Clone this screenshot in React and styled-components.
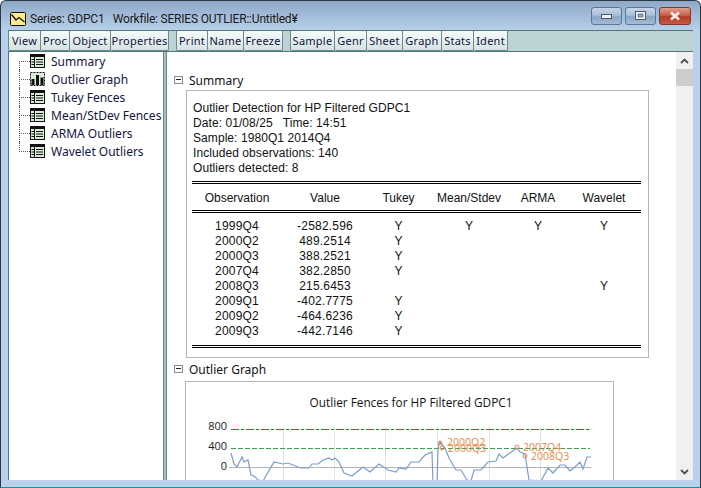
import React from 'react'
import styled, { createGlobalStyle } from 'styled-components'

const Global = createGlobalStyle`
  html, body { margin: 0; padding: 0; background: #fff; overflow: hidden; }
  * { box-sizing: border-box; }
`

const Frame = styled.div`
  width: 701px;
  height: 488px;
  display: flex;
  flex-direction: column;
  padding: 0 7px 7px 7px;
  border: 1px solid #2c3a44;
  border-bottom-color: #1f8fa0;
  border-radius: 6px 6px 0 0;
  background: linear-gradient(#8ea8c8 0, #b9d1ea 30px);
  font-family: "Noto Sans", sans-serif;
  overflow: hidden;
`

const TitleBar = styled.div`
  height: 29px;
  flex: none;
  display: flex;
  align-items: center;
  gap: 4px;
  padding: 7px 2px 0 2px;
  font-family: Roboto, sans-serif;
  font-size: 12px;
  letter-spacing: -0.2px;
  color: #1a1a1a;
`

const TitleText = styled.span`
  white-space: pre;
  flex: 1;
`

const WinButtons = styled.div`
  display: flex;
  gap: 3px;
  margin-top: -7px;
`

const WinButton = styled.div`
  width: ${p => p.$close ? 32 : 31}px;
  height: 18px;
  border: 1px solid ${p => p.$close ? '#7a3a30' : '#5f7690'};
  border-radius: 3px;
  display: flex;
  align-items: center;
  justify-content: center;
  background: ${p => p.$close
    ? 'linear-gradient(#e0a090 0, #c9604c 45%, #b23a26 55%, #c95a44 100%)'
    : 'linear-gradient(#c5d5e8 0, #a9bfd8 45%, #8aa5c5 55%, #a3bcd8 100%)'};
`

const Toolbar = styled.div`
  height: 22px;
  flex: none;
  display: flex;
  background: #bcd3d3;
  border-top: 1px solid #54757a;
  border-bottom: 1px solid #54757a;
`

const ToolGroup = styled.div`
  display: flex;
  margin-right: ${p => p.$gap || 0}px;
`

const ToolButton = styled.div`
  width: ${p => p.$w}px;
  height: 20px;
  display: flex;
  align-items: center;
  justify-content: center;
  font-size: 11px;
  color: #14143c;
  letter-spacing: 0.25px;
  border: 1px solid #6d8a8a;
  border-top: none;
  border-left: none;
  border-radius: 0 0 2px 2px;
  background: linear-gradient(#f6fbfb, #d5e3e3);
  &:first-child {
    border-left: 1px solid #6d8a8a;
  }
`

const Body = styled.div`
  flex: 1;
  min-height: 0;
  display: flex;
  background: #fff;
  border-left: 1px solid #54757a;
`

const Tree = styled.div`
  width: 154px;
  flex: none;
  display: flex;
  flex-direction: column;
`

const TreeRow = styled.div`
  position: relative;
  height: 18px;
  display: flex;
  align-items: center;
  gap: 6px;
  padding-left: 21px;
  font-size: 12px;
  white-space: nowrap;
  color: #14143c;
  &::before {
    content: "";
    position: absolute;
    left: 10px;
    top: ${p => p.$first ? '9px' : '0'};
    height: ${p => p.$first ? '9px' : p.$last ? '10px' : '18px'};
    border-left: 1px dotted #555;
  }
  &::after {
    content: "";
    position: absolute;
    left: 10px;
    top: 9px;
    width: 11px;
    border-top: 1px dotted #555;
  }
`

const Splitter = styled.div`
  width: 4px;
  flex: none;
  background: #a9c0c0;
  border-left: 1px solid #6d8a8a;
  border-right: 1px solid #6d8a8a;
`

const Main = styled.div`
  flex: 1;
  min-width: 0;
  overflow: hidden;
  padding: 19px 0 0 7px;
`

const SectionHead = styled.div`
  height: 18px;
  display: flex;
  align-items: center;
  gap: 6px;
  font-size: 12px;
  color: #111;
`

const Collapse = styled.div`
  width: 9px;
  height: 8px;
  flex: none;
  margin-top: -1px;
  border: 1px solid #8a8a8a;
  display: flex;
  align-items: center;
  justify-content: center;
  &::before {
    content: "";
    width: 5px;
    border-top: 1px solid #222;
  }
`

const ReportBox = styled.div`
  width: 463px;
  margin: 1px 0 2px 12px;
  padding: 10px 5px 0 5px;
  height: 268px;
  border: 1px solid #b4b4b4;
  font-family: "Liberation Sans", Arial, sans-serif;
  font-size: 12px;
  color: #111;
`

const InfoLine = styled.div`
  height: 15px;
  line-height: 15px;
  padding-left: 1px;
  white-space: pre;
  letter-spacing: 0.07px;
`

const Table = styled.div`
  width: 449px;
  margin-top: 5px;
  border-top: 3px double #000;
  border-bottom: 3px double #000;
  height: 167px;
`

const columns = '90px 86px 61px 80px 58px 74px'

const HeadRow = styled.div`
  display: grid;
  grid-template-columns: ${columns};
  height: 29px;
  align-items: center;
  padding-top: 1px;
  border-bottom: 3px double #000;
`

const DataRow = styled.div`
  display: grid;
  grid-template-columns: ${columns};
  height: 15px;
  line-height: 15px;
  letter-spacing: 0.2px;
`

const Rows = styled.div`
  padding-top: 6px;
`

const Cell = styled.div`
  text-align: center;
  white-space: nowrap;
`

const ChartCard = styled.div`
  width: 429px;
  height: 300px;
  margin: 3px 0 0 11px;
  border: 1px solid #b4b4b4;
  background: #fff;
`

const ChartSvg = styled.svg`
  display: block;
`

const ScrollBar = styled.div`
  width: 17px;
  flex: none;
  display: flex;
  flex-direction: column;
  align-items: center;
  background: #f0f0f0;
`

const ScrollCap = styled.div`
  height: 17px;
  flex: none;
  display: flex;
  align-items: center;
  justify-content: center;
`

const ScrollThumb = styled.div`
  width: 100%;
  height: 17px;
  flex: none;
  background: #cdcdcd;
`

const ScrollRest = styled.div`
  flex: 1;
`

const TableIcon = () => (
  <svg width="15" height="14" viewBox="0 0 15 14">
    <rect x="0.5" y="0.5" width="14" height="13" fill="#d8ecd8" stroke="#111" />
    <rect x="1" y="1" width="13" height="2" fill="#111" />
    <path d="M4.5 1V13" stroke="#111" />
    <path d="M6 5.5H13M6 8H13M6 10.5H13M1.5 5.5H4M1.5 8H4M1.5 10.5H4" stroke="#111" />
  </svg>
)

const GraphIcon = () => (
  <svg width="15" height="14" viewBox="0 0 15 14">
    <rect x="0.5" y="0.5" width="14" height="13" fill="#d8ecd8" stroke="#111" strokeDasharray="2 1" />
    <path d="M3 13V7M7.5 13V3M12 13V5.5" stroke="#111" strokeWidth="3" />
  </svg>
)

const SeriesIcon = () => (
  <svg width="16" height="14" viewBox="0 0 16 14">
    <rect x="0.5" y="0.5" width="15" height="13" rx="1" fill="#ffe98a" stroke="#111" />
    <path d="M1.5 2.5L6 8L9 5.5L14.5 10" fill="none" stroke="#111" strokeWidth="1.3" />
  </svg>
)

const treeItems = [
  ['Summary', TableIcon],
  ['Outlier Graph', GraphIcon],
  ['Tukey Fences', TableIcon],
  ['Mean/StDev Fences', TableIcon],
  ['ARMA Outliers', TableIcon],
  ['Wavelet Outliers', TableIcon],
]

const toolGroups = [
  { gap: 7, items: [['View', 33], ['Proc', 29], ['Object', 41], ['Properties', 58]] },
  { gap: 7, items: [['Print', 32], ['Name', 36], ['Freeze', 39]] },
  { gap: 0, items: [['Sample', 45], ['Genr', 32], ['Sheet', 36], ['Graph', 39], ['Stats', 32], ['Ident', 34]] },
]

const rows = [
  ['1999Q4', '-2582.596', 'Y', 'Y', 'Y', 'Y'],
  ['2000Q2', '489.2514', 'Y', '', '', ''],
  ['2000Q3', '388.2521', 'Y', '', '', ''],
  ['2007Q4', '382.2850', 'Y', '', '', ''],
  ['2008Q3', '215.6453', '', '', '', 'Y'],
  ['2009Q1', '-402.7775', 'Y', '', '', ''],
  ['2009Q2', '-464.6236', 'Y', '', '', ''],
  ['2009Q3', '-442.7146', 'Y', '', '', ''],
]

const heads = ['Observation', 'Value', 'Tukey', 'Mean/Stdev', 'ARMA', 'Wavelet']

// traced from the reference, in screen pixels
const seriesA = [[231,453],[234,464],[237,467],[242,457],[244,462],[248,460],[251,475],[254,476],[258,480],[263,481],[274,462],[283,464],[288,463],[298,467],[301,468],[309,468],[312,464],[318,464],[323,460],[329,458],[332,460],[335,458],[339,462],[344,473],[352,476],[363,467],[370,472],[379,464],[388,470],[396,472],[399,468],[406,469],[411,462],[419,462],[425,455],[432,452],[433,484]]
const seriesB = [[437,484],[438,448],[440,442],[445,448],[449,458],[456,470],[461,470],[467,480],[471,481],[474,470],[481,470],[488,462],[496,461],[499,454],[503,458],[507,455],[517,448],[520,452],[525,454],[529,480],[541,481],[548,468],[553,473],[560,465],[565,465],[570,471],[575,467],[580,462],[583,469],[587,457],[591,457]]
const grid = [283, 334, 385, 437, 489, 540]
const markers = [[440, 443], [442, 448], [517, 447], [525, 456]]
const labels = [['2000Q3', 448, 452], ['2000Q2', 447, 446], ['2007Q4', 523, 451], ['2008Q3', 531, 460]]

const OX = 186
const OY = 382
const toPts = list => list.map(([x, y]) => `${x - OX},${y - OY}`).join(' ')

function Chart() {
  return (
    <ChartSvg width="427" height="298" viewBox="0 0 427 298">
      <text x="225" y="25" textAnchor="middle" fontFamily="Open Sans, sans-serif" fontSize="11.8" fill="#111">
        Outlier Fences for HP Filtered GDPC1
      </text>
      {grid.map(x => (
        <line key={x} x1={x - OX + 0.5} x2={x - OX + 0.5} y1={427 - OY} y2={298} stroke="#e2e2e2" />
      ))}
      <line x1={229 - OX} x2={591 - OX} y1={467.5 - OY} y2={467.5 - OY} stroke="#b4b4b4" />
      {[['800', 430], ['400', 450], ['0', 470]].map(([t, y]) => (
        <text key={t} x={227 - OX} y={y - OY} textAnchor="end" fontFamily="Open Sans, sans-serif" fontSize="11" fill="#222">{t}</text>
      ))}
      <line x1={231 - OX} x2={590 - OX} y1={429.5 - OY} y2={429.5 - OY} stroke="#dd2a26" shapeRendering="crispEdges" strokeDasharray="8 2 3 2" />
      <line x1={231 - OX} x2={590 - OX} y1={448.5 - OY} y2={448.5 - OY} stroke="#3f9a54" shapeRendering="crispEdges" strokeDasharray="5 2" />
      <polyline points={toPts(seriesA)} fill="none" stroke="#7c9ccf" strokeWidth="1.2" />
      <polyline points={toPts(seriesB)} fill="none" stroke="#7c9ccf" strokeWidth="1.2" />
      {markers.map(([x, y]) => (
        <circle key={x + '-' + y} cx={x - OX} cy={y - OY} r="2" fill="none" stroke="#e8894a" />
      ))}
      {labels.map(([t, x, y]) => (
        <text key={t} x={x - OX} y={y - OY} fontFamily="Open Sans, sans-serif" fontSize="10.5" fill="#e8894a">{t}</text>
      ))}
    </ChartSvg>
  )
}

export default function App() {
  return (
    <Frame>
      <Global />
      <TitleBar>
        <SeriesIcon />
        <TitleText>Series: GDPC1   Workfile: SERIES OUTLIER::Untitled¥</TitleText>
        <WinButtons>
          <WinButton>
            <svg width="11" height="6" viewBox="0 0 11 6"><rect x="0.5" y="1.5" width="10" height="4" fill="#eef3f8" stroke="#4a5a6a" /></svg>
          </WinButton>
          <WinButton>
            <svg width="11" height="9" viewBox="0 0 11 9"><rect x="0.5" y="0.5" width="10" height="8" fill="#eef3f8" stroke="#4a5a6a" /><rect x="3" y="3" width="5" height="3" fill="#8aa5c5" stroke="#4a5a6a" strokeWidth="0.6" /></svg>
          </WinButton>
          <WinButton $close>
            <svg width="12" height="10" viewBox="0 0 12 10"><path d="M2 1.5L10 8.5M10 1.5L2 8.5" stroke="#f4ecea" strokeWidth="2.6" /></svg>
          </WinButton>
        </WinButtons>
      </TitleBar>
      <Toolbar>
        {toolGroups.map((g, i) => (
          <ToolGroup key={i} $gap={g.gap}>
            {g.items.map(([label, w]) => <ToolButton key={label} $w={w}>{label}</ToolButton>)}
          </ToolGroup>
        ))}
      </Toolbar>
      <Body>
        <Tree>
          {treeItems.map(([label, Icon], i) => (
            <TreeRow key={label} $first={i === 0} $last={i === treeItems.length - 1}>
              <Icon />
              {label}
            </TreeRow>
          ))}
        </Tree>
        <Splitter />
        <Main>
          <SectionHead><Collapse />Summary</SectionHead>
          <ReportBox>
            <InfoLine>Outlier Detection for HP Filtered GDPC1</InfoLine>
            <InfoLine>Date: 01/08/25   Time: 14:51</InfoLine>
            <InfoLine>Sample: 1980Q1 2014Q4</InfoLine>
            <InfoLine>Included observations: 140</InfoLine>
            <InfoLine>Outliers detected: 8</InfoLine>
            <Table>
              <HeadRow>{heads.map(h => <Cell key={h}>{h}</Cell>)}</HeadRow>
              <Rows>
                {rows.map(r => (
                  <DataRow key={r[0]}>{r.map((c, i) => <Cell key={i}>{c}</Cell>)}</DataRow>
                ))}
              </Rows>
            </Table>
          </ReportBox>
          <SectionHead><Collapse />Outlier Graph</SectionHead>
          <ChartCard><Chart /></ChartCard>
        </Main>
        <ScrollBar>
          <ScrollCap>
            <svg width="9" height="6" viewBox="0 0 9 6"><path d="M1 5L4.5 1.5L8 5" fill="none" stroke="#505050" strokeWidth="1.8" /></svg>
          </ScrollCap>
          <ScrollThumb />
          <ScrollRest />
          <ScrollCap>
            <svg width="9" height="6" viewBox="0 0 9 6"><path d="M1 1L4.5 4.5L8 1" fill="none" stroke="#505050" strokeWidth="1.8" /></svg>
          </ScrollCap>
        </ScrollBar>
      </Body>
    </Frame>
  )
}
